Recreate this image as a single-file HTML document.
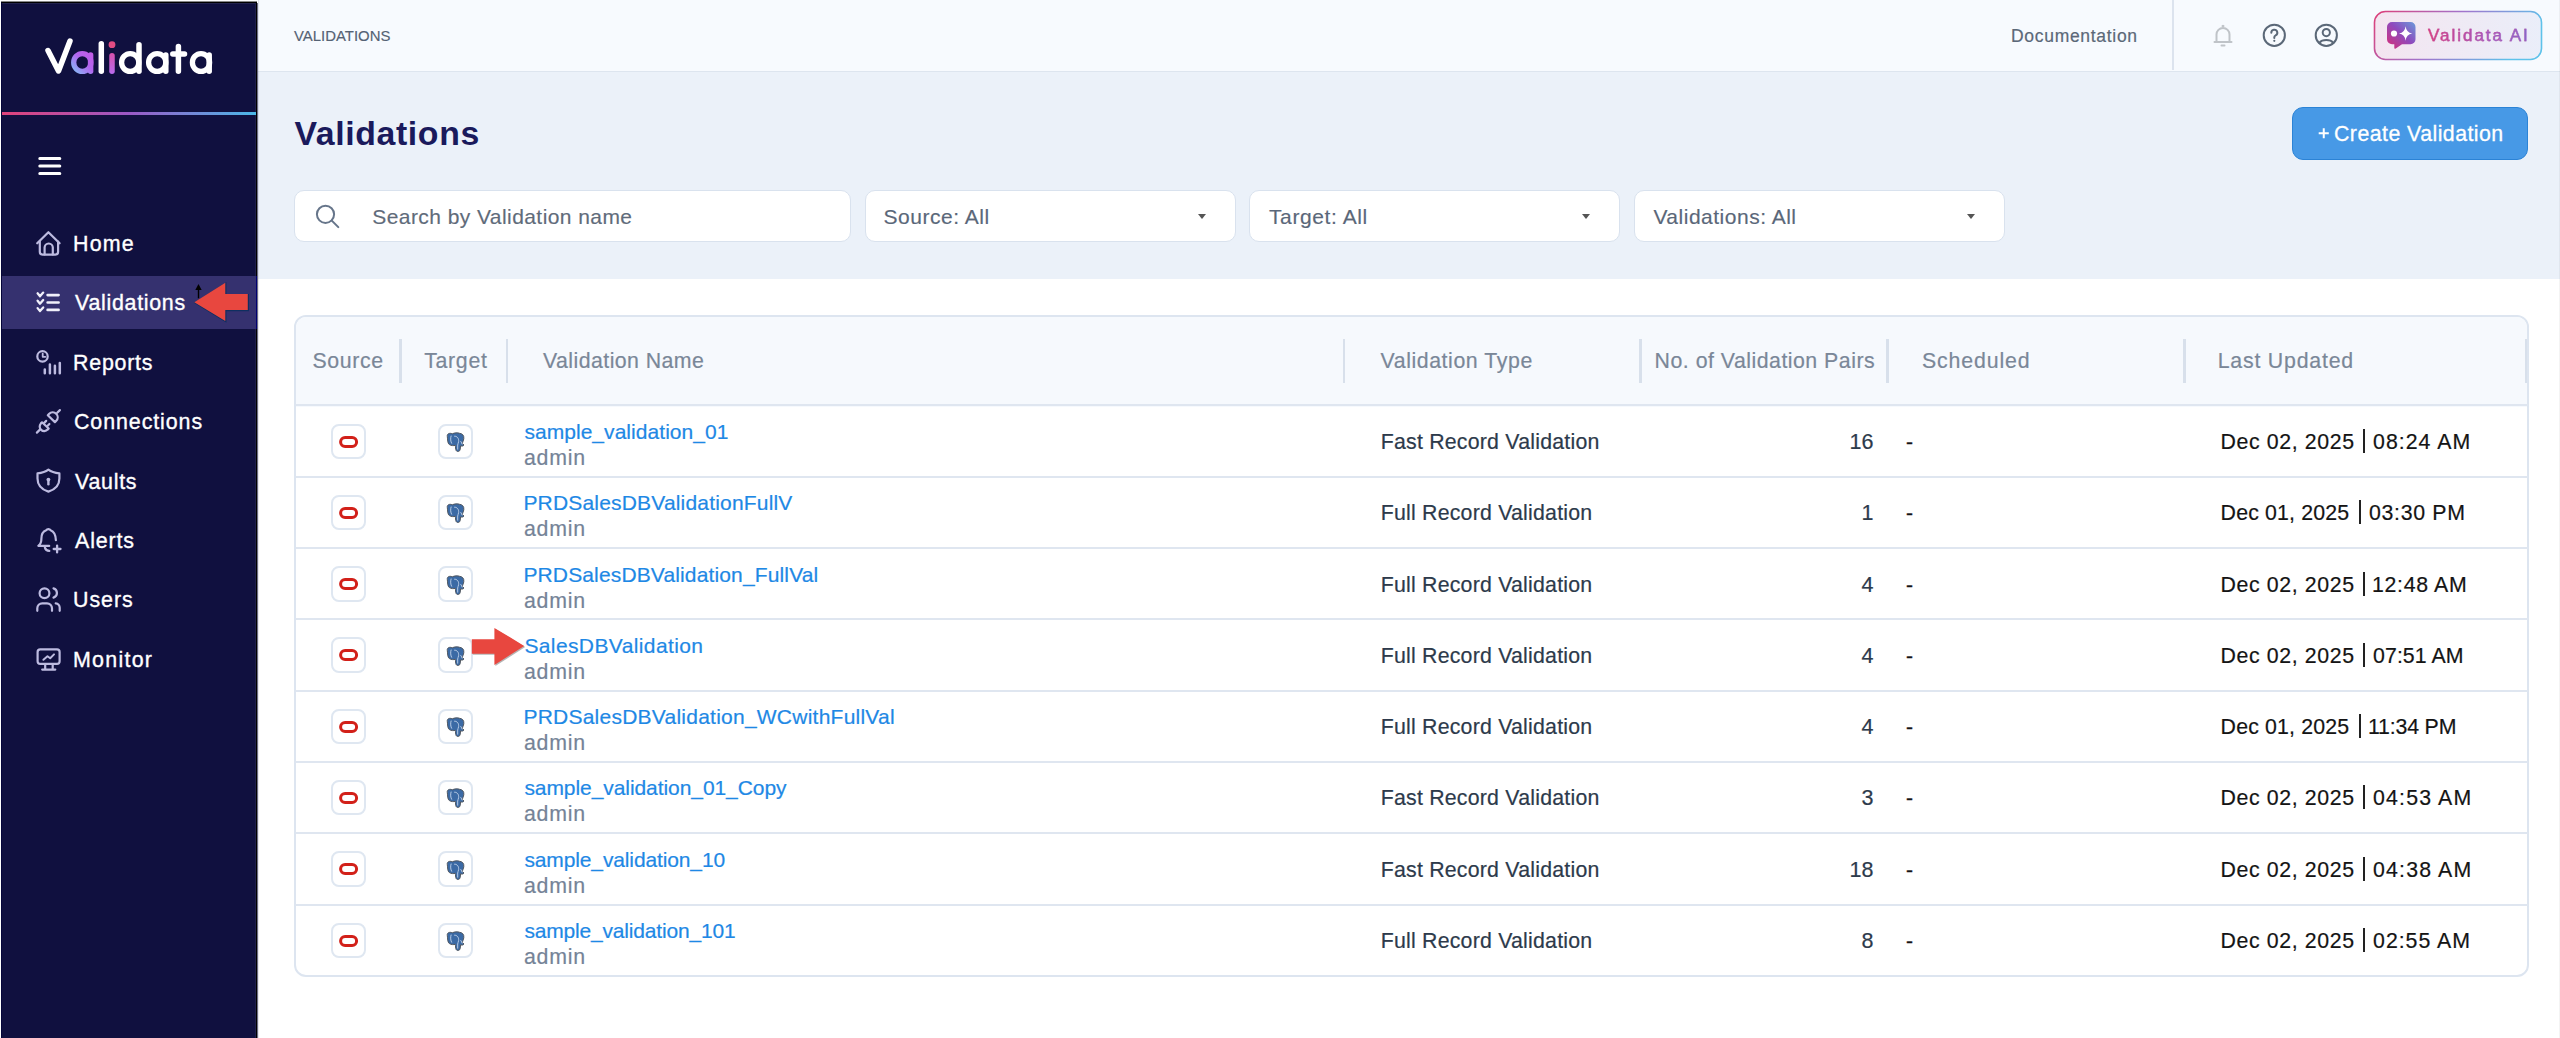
<!DOCTYPE html>
<html><head><meta charset="utf-8"><style>
*{margin:0;padding:0;box-sizing:border-box}
html,body{width:2560px;height:1038px;overflow:hidden;background:#fff;font-family:"Liberation Sans",sans-serif}
#sb{position:absolute;left:1px;top:2px;width:256px;height:1036px;background:#10103F;border-top:1px solid #000;border-right:1px solid #000;border-left:1px solid #05053a}
#sbtop{position:absolute;left:1px;top:1px;width:256px;height:1px;background:#888}
#sbw{position:absolute;left:257px;top:3px;width:1px;height:1038px;background:#6E6E85}
.gline{position:absolute;left:2px;top:112px;width:254px;height:3px;background:linear-gradient(90deg,#E0437A,#9B59C6 50%,#4BB8E8)}
.act{position:absolute;left:2px;top:276px;width:254px;height:53px;background:#35316F}
#hdr{position:absolute;left:258px;top:0;width:2302px;height:72px;background:#F7FAFE;border-bottom:1px solid #DDE5EF}
#gray{position:absolute;left:258px;top:72px;width:2302px;height:206.6px;background:#EBF1F9}
.t{position:absolute;white-space:pre;line-height:1}
.ico{position:absolute;overflow:visible}
.box{position:absolute;background:#fff;border:1px solid #D9E2EE;border-radius:10px;top:190px;height:52px}
.caret{position:absolute;top:214px;width:0;height:0;border-left:4.5px solid transparent;border-right:4.5px solid transparent;border-top:5px solid #555}
#card{position:absolute;left:293.5px;top:314.5px;width:2235.5px;height:662.5px;border:2px solid #DDE5F0;border-radius:12px;overflow:hidden;background:#fff}
#thead{position:absolute;left:0;top:0;width:100%;height:90px;background:#F6F9FD}
.rl{position:absolute;left:0;width:100%;height:1.5px;background:#DCE5F0}
.dv{position:absolute;top:339px;width:2.5px;height:44px;background:#D8E0EB}
.ib{position:absolute;width:35.5px;height:35.5px;border:2px solid #DFE7F1;border-radius:8px;background:#fff}
</style></head><body>
<svg width="0" height="0" style="position:absolute"><defs><g id="pg">
<path d="M447.3 436.5 C446.8 433.8 449.5 432.6 452.3 433.8 C454.5 432.7 457.5 432.6 459.5 433.3 C462.3 433.5 464.2 435.5 463.8 438.5 C463.5 440.8 462.5 442.2 462.4 443.6 L464 445 C463.2 446.3 461.5 446.3 460.6 445.8 L460.2 449.3 C460 451.6 457.2 452.2 456.2 450.6 C455.4 449.2 455.6 446.8 455.3 445.3 C453.5 445.8 451.4 445.8 449.4 444.6 C447.4 443.2 447.7 439.5 447.3 436.5 Z" fill="#3B6AA5" stroke="#50565E" stroke-width="1"/>
<path d="M451.2 435.6 C450.3 438.3 450.6 441.6 451.8 443.6 M454.2 436.2 C457.2 436 459 438.5 458.6 441.6 C458.4 443 457.8 444 457.7 445 V449.6 M460.6 441.2 C461.5 442.5 462 443.5 462.2 444.4" fill="none" stroke="#C5D6EC" stroke-width="0.9"/>
</g></defs></svg>
<div id="hdr"></div><div id="gray"></div><div style="position:absolute;left:2559px;top:0;width:1px;height:1038px;background:rgba(0,0,0,0.045)"></div>
<div id="sb"></div><div id="sbtop"></div><div id="sbw"></div><div style="position:absolute;left:255px;top:3px;width:1px;height:1035px;background:#1F1F4A"></div><div style="position:absolute;left:2px;top:3px;width:254px;height:1px;background:#22224C"></div><div style="position:absolute;left:258px;top:0;width:1px;height:1038px;background:rgba(20,20,60,0.1)"></div>
<div class="gline"></div>
<div class="act"></div><div style="position:absolute;left:256px;top:276px;width:1px;height:53px;background:#000070"></div>
<svg class="ico" style="left:0;top:0" width="257" height="110" viewBox="0 0 257 110">
<defs>
<linearGradient id="ga" gradientUnits="userSpaceOnUse" x1="72" y1="74" x2="94" y2="52"><stop offset="0" stop-color="#7DC8F8"/><stop offset="0.55" stop-color="#B364EE"/><stop offset="1" stop-color="#C45BE6"/></linearGradient>
<linearGradient id="gi" gradientUnits="userSpaceOnUse" x1="112" y1="52" x2="112" y2="74"><stop offset="0" stop-color="#D84FA8"/><stop offset="1" stop-color="#B86BEE"/></linearGradient>
</defs>
<g fill="none" stroke-linecap="round" stroke-linejoin="round" stroke-width="5.5">
<path d="M48 50.5 L58.5 71 L70 41" stroke="#fff"/>
<ellipse cx="82.3" cy="62.5" rx="8.6" ry="8.9" stroke-width="5.3" stroke="url(#ga)"/>
<path d="M90.6 55 V71.2" stroke="url(#ga)"/>
<path d="M101.3 43.8 V71.2" stroke="#fff"/>
<path d="M112 55.8 V71.2" stroke="url(#gi)"/>
<ellipse cx="130.2" cy="62.5" rx="8.6" ry="8.9" stroke-width="5.3" stroke="#fff"/>
<path d="M139 44.8 V71.2" stroke="#fff"/>
<ellipse cx="157.2" cy="62.5" rx="8.6" ry="8.9" stroke-width="5.3" stroke="#fff"/>
<path d="M165.8 55 V71.2" stroke="#fff"/>
<path d="M178.4 46.5 V71.2 M172.8 54 H184.5" stroke="#fff"/>
<ellipse cx="201" cy="62.5" rx="8.6" ry="8.9" stroke-width="5.3" stroke="#fff"/>
<path d="M209.2 55 V71.2" stroke="#fff"/>
</g>
<circle cx="112" cy="44.7" r="3.4" fill="#E24C83"/>
</svg>
<svg class="ico" style="left:0;top:140px" width="100" height="50" viewBox="0 140 100 50">
<g stroke="#fff" stroke-width="3" stroke-linecap="round"><path d="M39.8 158.5H59.8M39.8 166H59.8M39.8 173.5H59.8"/></g></svg>
<svg class="ico" style="left:30px;top:226px" width="36" height="34" viewBox="30 226 36 34"><g fill="none" stroke="#BDBBE0" stroke-width="2.2" stroke-linecap="round" stroke-linejoin="round"><path d="M37.2 243.3 L48.4 232.2 L59.6 243.3"/><path d="M39.8 241.5 V251.8 Q39.8 254.6 42.6 254.6 H55.3 Q58.1 254.6 58.1 251.8 V241.5"/><path d="M44.6 254.4 V247.6 a4.1 4.1 0 0 1 8.2 0 V254.4"/></g></svg>
<div class="t" style="left:73px;top:234px;font-size:21.4px;color:#fff;letter-spacing:1.233px;-webkit-text-stroke:0.35px #fff">Home</div>
<svg class="ico" style="left:30px;top:285px" width="36" height="34" viewBox="30 285 36 34"><g fill="none" stroke="#F0F0FA" stroke-width="2.2" stroke-linecap="round" stroke-linejoin="round"><path d="M37.6 293.3 L40 296.3 L43.2 292.6 M37.6 300.7 L40 303.7 L43.2 300 M37.6 308.1 L40 311.1 L43.2 307.4" stroke-width="2.3"/><path d="M47.6 295.1 H58.6 M47.6 302.5 H58.6 M47.6 309.9 H58.6" stroke-width="2.6"/></g></svg>
<div class="t" style="left:75px;top:293px;font-size:21.4px;color:#fff;letter-spacing:0.71px;-webkit-text-stroke:0.35px #fff">Validations</div>
<svg class="ico" style="left:30px;top:345px" width="36" height="34" viewBox="30 345 36 34"><g fill="none" stroke="#BDBBE0" stroke-width="2.2" stroke-linecap="round" stroke-linejoin="round"><circle cx="42.5" cy="356.4" r="5.2"/><path d="M42.7 353.6 V356.8 H45.3" stroke-width="1.8"/><path d="M44.8 369.6 V373.2 M49.9 364.6 V373.2 M54.9 365.8 V373.2 M59.8 363.1 V373.2" stroke-width="2.5"/></g></svg>
<div class="t" style="left:73px;top:353px;font-size:21.4px;color:#fff;letter-spacing:0.767px;-webkit-text-stroke:0.35px #fff">Reports</div>
<svg class="ico" style="left:30px;top:404px" width="36" height="34" viewBox="30 404 36 34"><g fill="none" stroke="#BDBBE0" stroke-width="2.2" stroke-linecap="round" stroke-linejoin="round"><path d="M47.8 415.2 L54.9 422.1 L56.3 420.7 A4.95 4.95 0 0 0 49.2 413.8 Z"/><path d="M57.2 412.8 L59.9 410.1"/><path d="M42 422.3 L48.7 428.5 L47.6 429.6 A4.56 4.56 0 0 1 40.9 423.4 Z"/><path d="M44.2 422.9 L46.2 420.9 M47.4 426 L49.4 424"/><path d="M36.9 432.6 L39.9 429.6"/></g></svg>
<div class="t" style="left:74px;top:412px;font-size:21.4px;color:#fff;letter-spacing:0.92px;-webkit-text-stroke:0.35px #fff">Connections</div>
<svg class="ico" style="left:30px;top:464px" width="36" height="34" viewBox="30 464 36 34"><g fill="none" stroke="#BDBBE0" stroke-width="2.2" stroke-linecap="round" stroke-linejoin="round"><path d="M48.4 469.7 C45.6 471.9 41.8 473 37.5 473.4 V478.5 C37.5 485 41.8 489.6 48.4 491.6 C55 489.6 59.4 485 59.4 478.5 V473.4 C55 473 51.2 471.9 48.4 469.7 Z"/><circle cx="48.4" cy="479.6" r="1.9" fill="#BDBBE0" stroke="none"/><path d="M48.4 480.5 V484.2" stroke-width="2.4"/></g></svg>
<div class="t" style="left:75px;top:472px;font-size:21.4px;color:#fff;letter-spacing:0.74px;-webkit-text-stroke:0.35px #fff">Vaults</div>
<svg class="ico" style="left:30px;top:523px" width="36" height="34" viewBox="30 523 36 34"><g fill="none" stroke="#BDBBE0" stroke-width="2.2" stroke-linecap="round" stroke-linejoin="round"><path d="M38.6 545.7 C40.6 544.2 41.4 542 41.4 538.5 C41.4 534 43.2 531.3 46.2 530.2 C47.2 528.7 49.6 528.7 50.6 530.2 C53.8 531.4 55.7 534.5 55.9 540.2"/><path d="M38.6 545.9 H49.2"/><path d="M44.9 547.6 A4.5 4.5 0 0 0 49.3 550.9"/><path d="M57.1 545.6 V552.4 M53.7 549 H60.5" stroke-width="2.3"/></g></svg>
<div class="t" style="left:75px;top:531px;font-size:21.4px;color:#fff;letter-spacing:0.86px;-webkit-text-stroke:0.35px #fff">Alerts</div>
<svg class="ico" style="left:30px;top:582px" width="36" height="34" viewBox="30 582 36 34"><g fill="none" stroke="#BDBBE0" stroke-width="2.2" stroke-linecap="round" stroke-linejoin="round"><circle cx="44.5" cy="593.2" r="4.9"/><path d="M53.5 588.4 A4.8 4.8 0 0 1 53.5 597.6"/><path d="M37.3 610.8 V608.3 a5 5 0 0 1 5 -5 H47 a5 5 0 0 1 5 5 V610.8"/><path d="M55.7 603.4 a4.4 4.4 0 0 1 4 4.4 V610.8"/></g></svg>
<div class="t" style="left:73px;top:590px;font-size:21.4px;color:#fff;letter-spacing:0.975px;-webkit-text-stroke:0.35px #fff">Users</div>
<svg class="ico" style="left:30px;top:642px" width="36" height="34" viewBox="30 642 36 34"><g fill="none" stroke="#BDBBE0" stroke-width="2.2" stroke-linecap="round" stroke-linejoin="round"><rect x="37.6" y="649.3" width="22" height="14.6" rx="2.6"/><path d="M43.4 659.8 L47.5 656.2 L50.2 658.2 L54 654.4" stroke-width="2"/><path d="M45.2 665 V669 M52.7 665 V669"/><path d="M42.2 669.6 H55.3"/></g></svg>
<div class="t" style="left:73px;top:650px;font-size:21.4px;color:#fff;letter-spacing:1.267px;-webkit-text-stroke:0.35px #fff">Monitor</div>
<div class="t" style="left:293.9px;top:29px;font-size:14.9px;color:#556274;letter-spacing:0.03px;-webkit-text-stroke:0.15px #556274">VALIDATIONS</div>
<div class="t" style="left:2011px;top:28px;font-size:17.5px;color:#5B6878;letter-spacing:0.7px;-webkit-text-stroke:0.2px #5B6878">Documentation</div>
<div style="position:absolute;left:2172px;top:0;width:1.5px;height:70px;background:#DCE3EE"></div>
<svg class="ico" style="left:2210px;top:22px" width="26" height="28" viewBox="0 0 26 28"><g fill="none" stroke="#BFC3C8" stroke-width="2" stroke-linecap="round" stroke-linejoin="round"><path d="M12.5 4 a1 1 0 0 1 1 0"/><path d="M6.5 19 V12.5 a6.5 6.5 0 0 1 13 0 V19"/><path d="M4.5 20 H21.5"/><path d="M11.5 23.5 H14.5"/></g></svg>
<svg class="ico" style="left:2262px;top:23px" width="25" height="25" viewBox="0 0 25 25"><g fill="none" stroke="#5B6878" stroke-width="2" stroke-linecap="round"><circle cx="12.3" cy="12.3" r="10.6"/><path d="M9.3 9.7 a3 3 0 1 1 4.3 2.7 c-0.8 0.4 -1.3 1 -1.3 1.9 v0.6"/></g><circle cx="12.3" cy="17.8" r="1.1" fill="#5B6878"/></svg>
<svg class="ico" style="left:2314px;top:23px" width="25" height="25" viewBox="0 0 25 25"><g fill="none" stroke="#5B6878" stroke-width="2" stroke-linecap="round"><circle cx="12.3" cy="12.3" r="10.6"/><circle cx="12.3" cy="9.6" r="3.6"/><path d="M5.2 19.8 a8.2 5.5 0 0 1 14.2 0"/></g></svg>
<svg class="ico" style="left:2373px;top:10px" width="170" height="51" viewBox="0 0 170 51">
<defs>
<linearGradient id="bb" x1="0" y1="0" x2="1" y2="0.25"><stop offset="0" stop-color="#DD3F78"/><stop offset="0.5" stop-color="#A174CC"/><stop offset="1" stop-color="#5EC2EA"/></linearGradient>
<linearGradient id="bf" x1="0" y1="0" x2="1" y2="0"><stop offset="0" stop-color="#F4E5F0"/><stop offset="1" stop-color="#EAEEF9"/></linearGradient>
<linearGradient id="bi" x1="0" y1="1" x2="1" y2="0"><stop offset="0" stop-color="#DA2C74"/><stop offset="0.55" stop-color="#8E4BBE"/><stop offset="1" stop-color="#6A9ADA"/></linearGradient>
<linearGradient id="bt" x1="0" y1="0" x2="1" y2="0"><stop offset="0" stop-color="#DB3D7D"/><stop offset="1" stop-color="#7A70D4"/></linearGradient>
</defs>
<rect x="1.5" y="1.5" width="167" height="48" rx="11" fill="url(#bf)" stroke="url(#bb)" stroke-width="1.6"/>
<path d="M19 12 H37.5 a5 5 0 0 1 5 5 V29.3 a5 5 0 0 1 -5 5 H29 L22.8 38.5 Q21.3 39.5 21.3 37.8 V34.3 H19 a5 5 0 0 1 -5 -5 V17 a5 5 0 0 1 5 -5 Z" fill="url(#bi)"/>
<circle cx="21" cy="23.5" r="3.1" fill="#fff"/>
<path d="M32.6 16.3 Q33.3 22.6 39.2 23.5 Q33.3 24.4 32.6 30.7 Q31.9 24.4 26 23.5 Q31.9 22.6 32.6 16.3 Z" fill="#fff"/>
</svg>
<div class="t" style="left:2428px;top:27px;font-size:17px;color:#B04EA6;letter-spacing:1.98px;-webkit-text-stroke:0.35px #C04A9A;background:linear-gradient(90deg,#DB3D7D,#9A5CC8 60%,#7A70D4);-webkit-background-clip:text;background-clip:text;color:transparent">Validata AI</div>
<div class="t" style="left:294.4px;top:117px;font-size:33.8px;color:#1A1A5C;letter-spacing:0.64px;font-weight:bold">Validations</div>
<div style="position:absolute;left:2292px;top:107px;width:236px;height:53px;background:#4799E6;border:1px solid #2B83D6;border-radius:11px"></div>
<svg class="ico" style="left:2316px;top:126px" width="16" height="16" viewBox="2316 126 16 16"><path d="M2323.75 128.3 V138.3 M2318.7 133.3 H2328.8" stroke="#fff" stroke-width="2"/></svg>
<div class="t" style="left:2334px;top:124px;font-size:21.3px;color:#fff;letter-spacing:0.463px;-webkit-text-stroke:0.3px #fff">Create Validation</div>
<div class="box" style="left:294px;width:557px"></div>
<svg class="ico" style="left:312px;top:202px" width="30" height="30" viewBox="0 0 30 30"><g fill="none" stroke="#66758A" stroke-width="2" stroke-linecap="round"><circle cx="13.5" cy="12.3" r="8.6"/><path d="M19.8 18.6 L26.3 25.1"/></g></svg>
<div class="t" style="left:372.3px;top:206px;font-size:21px;color:#5F6B7A;letter-spacing:0.429px;-webkit-text-stroke:0.15px #5F6B7A">Search by Validation name</div>
<div class="box" style="left:865px;width:371px"></div>
<div class="t" style="left:883.5px;top:206px;font-size:21px;color:#5A6779;letter-spacing:0.52px;-webkit-text-stroke:0.15px #5A6779">Source: All</div>
<div class="caret" style="left:1198px"></div>
<div class="box" style="left:1249px;width:371px"></div>
<div class="t" style="left:1269px;top:206px;font-size:21px;color:#5A6779;letter-spacing:0.6px;-webkit-text-stroke:0.15px #5A6779">Target: All</div>
<div class="caret" style="left:1582px"></div>
<div class="box" style="left:1634px;width:371px"></div>
<div class="t" style="left:1653.4px;top:206px;font-size:21px;color:#5A6779;letter-spacing:0.507px;-webkit-text-stroke:0.15px #5A6779">Validations: All</div>
<div class="caret" style="left:1967px"></div>
<div id="card"><div id="thead"></div></div>
<div class="rl" style="top:404px;left:295.5px;width:2232px;height:2px;background:#DFE6F0"></div>
<div class="rl" style="top:476px;left:295.5px;width:2232px;height:2px;background:#DFE6F0"></div>
<div class="rl" style="top:547px;left:295.5px;width:2232px;height:2px;background:#DFE6F0"></div>
<div class="rl" style="top:618px;left:295.5px;width:2232px;height:2px;background:#DFE6F0"></div>
<div class="rl" style="top:690px;left:295.5px;width:2232px;height:2px;background:#DFE6F0"></div>
<div class="rl" style="top:761px;left:295.5px;width:2232px;height:2px;background:#DFE6F0"></div>
<div class="rl" style="top:832px;left:295.5px;width:2232px;height:2px;background:#DFE6F0"></div>
<div class="rl" style="top:904px;left:295.5px;width:2232px;height:2px;background:#DFE6F0"></div>
<div class="t" style="left:312.5px;top:351px;font-size:21.3px;color:#7A8798;letter-spacing:0.62px;-webkit-text-stroke:0.2px #7A8798">Source</div>
<div class="t" style="left:424.2px;top:351px;font-size:21.3px;color:#7A8798;letter-spacing:0.7px;-webkit-text-stroke:0.2px #7A8798">Target</div>
<div class="t" style="left:543px;top:351px;font-size:21.3px;color:#7A8798;letter-spacing:0.443px;-webkit-text-stroke:0.2px #7A8798">Validation Name</div>
<div class="t" style="left:1380.5px;top:351px;font-size:21.3px;color:#7A8798;letter-spacing:0.579px;-webkit-text-stroke:0.2px #7A8798">Validation Type</div>
<div class="t" style="left:1654.6px;top:351px;font-size:21.3px;color:#7A8798;letter-spacing:0.495px;-webkit-text-stroke:0.2px #7A8798">No. of Validation Pairs</div>
<div class="t" style="left:1922px;top:351px;font-size:21.3px;color:#7A8798;letter-spacing:0.875px;-webkit-text-stroke:0.2px #7A8798">Scheduled</div>
<div class="t" style="left:2217.7px;top:351px;font-size:21.3px;color:#7A8798;letter-spacing:0.8px;-webkit-text-stroke:0.2px #7A8798">Last Updated</div>
<div class="dv" style="left:399.0px"></div>
<div class="dv" style="left:505.8px"></div>
<div class="dv" style="left:1342.8px"></div>
<div class="dv" style="left:1639.4px"></div>
<div class="dv" style="left:1886.3px"></div>
<div class="dv" style="left:2183.2px"></div>
<div class="dv" style="left:2524.6px"></div>
<div class="ib" style="left:330.5px;top:423.50px"></div>
<svg class="ico" style="left:339px;top:435.50px" width="20" height="13" viewBox="0 0 20 13"><rect x="1.6" y="1.6" width="16" height="9" rx="4.5" fill="none" stroke="#D22019" stroke-width="3"/></svg>
<div class="ib" style="left:437.5px;top:423.50px"></div>
<svg class="ico" style="left:440px;top:428px" width="30" height="28" viewBox="440 428 30 28"><use href="#pg"/></svg>
<div class="t" style="left:524.4px;top:421px;font-size:21px;color:#1E88E5;letter-spacing:0.047px;-webkit-text-stroke:0.2px #1E88E5">sample_validation_01</div>
<div class="t" style="left:524px;top:448px;font-size:21.3px;color:#758397;letter-spacing:0.75px;-webkit-text-stroke:0.2px #758397">admin</div>
<div class="t" style="left:1380.7px;top:432px;font-size:21.3px;color:#2D3A4B;letter-spacing:0.229px;-webkit-text-stroke:0.2px #2D3A4B">Fast Record Validation</div>
<div class="t" style="right:686.5px;top:432px;font-size:21.5px;color:#2D3A4B;-webkit-text-stroke:0.2px #2D3A4B">16</div>
<div class="t" style="left:1906px;top:431px;font-size:21px;color:#141414;-webkit-text-stroke:0.3px #141414">-</div>
<div class="t" style="left:2220.6px;top:432px;font-size:21.3px;color:#141414;letter-spacing:0.609px;-webkit-text-stroke:0.2px #141414">Dec 02, 2025</div>
<div style="position:absolute;left:2363px;top:429px;width:2px;height:24px;background:#222"></div>
<div class="t" style="left:2373.1px;top:432px;font-size:21.3px;color:#141414;letter-spacing:1.014px;-webkit-text-stroke:0.2px #141414">08:24 AM</div>
<div class="ib" style="left:330.5px;top:494.79px"></div>
<svg class="ico" style="left:339px;top:506.79px" width="20" height="13" viewBox="0 0 20 13"><rect x="1.6" y="1.6" width="16" height="9" rx="4.5" fill="none" stroke="#D22019" stroke-width="3"/></svg>
<div class="ib" style="left:437.5px;top:494.79px"></div>
<svg class="ico" style="left:440px;top:499px" width="30" height="28" viewBox="440 428 30 28"><use href="#pg"/></svg>
<div class="t" style="left:523.4px;top:492px;font-size:21px;color:#1E88E5;letter-spacing:0.183px;-webkit-text-stroke:0.2px #1E88E5">PRDSalesDBValidationFullV</div>
<div class="t" style="left:524px;top:519px;font-size:21.3px;color:#758397;letter-spacing:0.75px;-webkit-text-stroke:0.2px #758397">admin</div>
<div class="t" style="left:1380.7px;top:503px;font-size:21.3px;color:#2D3A4B;letter-spacing:0.224px;-webkit-text-stroke:0.2px #2D3A4B">Full Record Validation</div>
<div class="t" style="right:686.5px;top:503px;font-size:21.5px;color:#2D3A4B;-webkit-text-stroke:0.2px #2D3A4B">1</div>
<div class="t" style="left:1906px;top:502px;font-size:21px;color:#141414;-webkit-text-stroke:0.3px #141414">-</div>
<div class="t" style="left:2220.6px;top:503px;font-size:21.3px;color:#141414;letter-spacing:0.173px;-webkit-text-stroke:0.2px #141414">Dec 01, 2025</div>
<div style="position:absolute;left:2358.8px;top:500px;width:2px;height:24px;background:#222"></div>
<div class="t" style="left:2369px;top:503px;font-size:21.3px;color:#141414;letter-spacing:0.686px;-webkit-text-stroke:0.2px #141414">03:30 PM</div>
<div class="ib" style="left:330.5px;top:566.08px"></div>
<svg class="ico" style="left:339px;top:578.08px" width="20" height="13" viewBox="0 0 20 13"><rect x="1.6" y="1.6" width="16" height="9" rx="4.5" fill="none" stroke="#D22019" stroke-width="3"/></svg>
<div class="ib" style="left:437.5px;top:566.08px"></div>
<svg class="ico" style="left:440px;top:571px" width="30" height="28" viewBox="440 428 30 28"><use href="#pg"/></svg>
<div class="t" style="left:523.4px;top:564px;font-size:21px;color:#1E88E5;letter-spacing:0.141px;-webkit-text-stroke:0.2px #1E88E5">PRDSalesDBValidation_FullVal</div>
<div class="t" style="left:524px;top:591px;font-size:21.3px;color:#758397;letter-spacing:0.75px;-webkit-text-stroke:0.2px #758397">admin</div>
<div class="t" style="left:1380.7px;top:575px;font-size:21.3px;color:#2D3A4B;letter-spacing:0.224px;-webkit-text-stroke:0.2px #2D3A4B">Full Record Validation</div>
<div class="t" style="right:686.5px;top:575px;font-size:21.5px;color:#2D3A4B;-webkit-text-stroke:0.2px #2D3A4B">4</div>
<div class="t" style="left:1906px;top:574px;font-size:21px;color:#141414;-webkit-text-stroke:0.3px #141414">-</div>
<div class="t" style="left:2220.6px;top:575px;font-size:21.3px;color:#141414;letter-spacing:0.609px;-webkit-text-stroke:0.2px #141414">Dec 02, 2025</div>
<div style="position:absolute;left:2363px;top:572px;width:2px;height:24px;background:#222"></div>
<div class="t" style="left:2372.1px;top:575px;font-size:21.3px;color:#141414;letter-spacing:0.657px;-webkit-text-stroke:0.2px #141414">12:48 AM</div>
<div class="ib" style="left:330.5px;top:637.37px"></div>
<svg class="ico" style="left:339px;top:649.37px" width="20" height="13" viewBox="0 0 20 13"><rect x="1.6" y="1.6" width="16" height="9" rx="4.5" fill="none" stroke="#D22019" stroke-width="3"/></svg>
<div class="ib" style="left:437.5px;top:637.37px"></div>
<svg class="ico" style="left:440px;top:642px" width="30" height="28" viewBox="440 428 30 28"><use href="#pg"/></svg>
<div class="t" style="left:524.4px;top:635px;font-size:21px;color:#1E88E5;letter-spacing:0.388px;-webkit-text-stroke:0.2px #1E88E5">SalesDBValidation</div>
<div class="t" style="left:524px;top:662px;font-size:21.3px;color:#758397;letter-spacing:0.75px;-webkit-text-stroke:0.2px #758397">admin</div>
<div class="t" style="left:1380.7px;top:646px;font-size:21.3px;color:#2D3A4B;letter-spacing:0.224px;-webkit-text-stroke:0.2px #2D3A4B">Full Record Validation</div>
<div class="t" style="right:686.5px;top:646px;font-size:21.5px;color:#2D3A4B;-webkit-text-stroke:0.2px #2D3A4B">4</div>
<div class="t" style="left:1906px;top:645px;font-size:21px;color:#141414;-webkit-text-stroke:0.3px #141414">-</div>
<div class="t" style="left:2220.6px;top:646px;font-size:21.3px;color:#141414;letter-spacing:0.609px;-webkit-text-stroke:0.2px #141414">Dec 02, 2025</div>
<div style="position:absolute;left:2363px;top:643px;width:2px;height:24px;background:#222"></div>
<div class="t" style="left:2373.1px;top:646px;font-size:21.3px;color:#141414;letter-spacing:0.057px;-webkit-text-stroke:0.2px #141414">07:51 AM</div>
<div class="ib" style="left:330.5px;top:708.66px"></div>
<svg class="ico" style="left:339px;top:720.66px" width="20" height="13" viewBox="0 0 20 13"><rect x="1.6" y="1.6" width="16" height="9" rx="4.5" fill="none" stroke="#D22019" stroke-width="3"/></svg>
<div class="ib" style="left:437.5px;top:708.66px"></div>
<svg class="ico" style="left:440px;top:713px" width="30" height="28" viewBox="440 428 30 28"><use href="#pg"/></svg>
<div class="t" style="left:523.4px;top:706px;font-size:21px;color:#1E88E5;letter-spacing:0.239px;-webkit-text-stroke:0.2px #1E88E5">PRDSalesDBValidation_WCwithFullVal</div>
<div class="t" style="left:524px;top:733px;font-size:21.3px;color:#758397;letter-spacing:0.75px;-webkit-text-stroke:0.2px #758397">admin</div>
<div class="t" style="left:1380.7px;top:717px;font-size:21.3px;color:#2D3A4B;letter-spacing:0.224px;-webkit-text-stroke:0.2px #2D3A4B">Full Record Validation</div>
<div class="t" style="right:686.5px;top:717px;font-size:21.5px;color:#2D3A4B;-webkit-text-stroke:0.2px #2D3A4B">4</div>
<div class="t" style="left:1906px;top:716px;font-size:21px;color:#141414;-webkit-text-stroke:0.3px #141414">-</div>
<div class="t" style="left:2220.6px;top:717px;font-size:21.3px;color:#141414;letter-spacing:0.173px;-webkit-text-stroke:0.2px #141414">Dec 01, 2025</div>
<div style="position:absolute;left:2358.8px;top:714px;width:2px;height:24px;background:#222"></div>
<div class="t" style="left:2368px;top:717px;font-size:21.3px;color:#141414;letter-spacing:-0.171px;-webkit-text-stroke:0.2px #141414">11:34 PM</div>
<div class="ib" style="left:330.5px;top:779.95px"></div>
<svg class="ico" style="left:339px;top:791.95px" width="20" height="13" viewBox="0 0 20 13"><rect x="1.6" y="1.6" width="16" height="9" rx="4.5" fill="none" stroke="#D22019" stroke-width="3"/></svg>
<div class="ib" style="left:437.5px;top:779.95px"></div>
<svg class="ico" style="left:440px;top:784px" width="30" height="28" viewBox="440 428 30 28"><use href="#pg"/></svg>
<div class="t" style="left:524.4px;top:777px;font-size:21px;color:#1E88E5;letter-spacing:-0.071px;-webkit-text-stroke:0.2px #1E88E5">sample_validation_01_Copy</div>
<div class="t" style="left:524px;top:804px;font-size:21.3px;color:#758397;letter-spacing:0.75px;-webkit-text-stroke:0.2px #758397">admin</div>
<div class="t" style="left:1380.7px;top:788px;font-size:21.3px;color:#2D3A4B;letter-spacing:0.229px;-webkit-text-stroke:0.2px #2D3A4B">Fast Record Validation</div>
<div class="t" style="right:686.5px;top:788px;font-size:21.5px;color:#2D3A4B;-webkit-text-stroke:0.2px #2D3A4B">3</div>
<div class="t" style="left:1906px;top:787px;font-size:21px;color:#141414;-webkit-text-stroke:0.3px #141414">-</div>
<div class="t" style="left:2220.6px;top:788px;font-size:21.3px;color:#141414;letter-spacing:0.609px;-webkit-text-stroke:0.2px #141414">Dec 02, 2025</div>
<div style="position:absolute;left:2363px;top:785px;width:2px;height:24px;background:#222"></div>
<div class="t" style="left:2373.1px;top:788px;font-size:21.3px;color:#141414;letter-spacing:1.157px;-webkit-text-stroke:0.2px #141414">04:53 AM</div>
<div class="ib" style="left:330.5px;top:851.24px"></div>
<svg class="ico" style="left:339px;top:863.24px" width="20" height="13" viewBox="0 0 20 13"><rect x="1.6" y="1.6" width="16" height="9" rx="4.5" fill="none" stroke="#D22019" stroke-width="3"/></svg>
<div class="ib" style="left:437.5px;top:851.24px"></div>
<svg class="ico" style="left:440px;top:856px" width="30" height="28" viewBox="440 428 30 28"><use href="#pg"/></svg>
<div class="t" style="left:524.4px;top:849px;font-size:21px;color:#1E88E5;letter-spacing:-0.126px;-webkit-text-stroke:0.2px #1E88E5">sample_validation_10</div>
<div class="t" style="left:524px;top:876px;font-size:21.3px;color:#758397;letter-spacing:0.75px;-webkit-text-stroke:0.2px #758397">admin</div>
<div class="t" style="left:1380.7px;top:860px;font-size:21.3px;color:#2D3A4B;letter-spacing:0.229px;-webkit-text-stroke:0.2px #2D3A4B">Fast Record Validation</div>
<div class="t" style="right:686.5px;top:860px;font-size:21.5px;color:#2D3A4B;-webkit-text-stroke:0.2px #2D3A4B">18</div>
<div class="t" style="left:1906px;top:859px;font-size:21px;color:#141414;-webkit-text-stroke:0.3px #141414">-</div>
<div class="t" style="left:2220.6px;top:860px;font-size:21.3px;color:#141414;letter-spacing:0.609px;-webkit-text-stroke:0.2px #141414">Dec 02, 2025</div>
<div style="position:absolute;left:2363px;top:857px;width:2px;height:24px;background:#222"></div>
<div class="t" style="left:2373.1px;top:860px;font-size:21.3px;color:#141414;letter-spacing:1.157px;-webkit-text-stroke:0.2px #141414">04:38 AM</div>
<div class="ib" style="left:330.5px;top:922.53px"></div>
<svg class="ico" style="left:339px;top:934.53px" width="20" height="13" viewBox="0 0 20 13"><rect x="1.6" y="1.6" width="16" height="9" rx="4.5" fill="none" stroke="#D22019" stroke-width="3"/></svg>
<div class="ib" style="left:437.5px;top:922.53px"></div>
<svg class="ico" style="left:440px;top:927px" width="30" height="28" viewBox="440 428 30 28"><use href="#pg"/></svg>
<div class="t" style="left:524.4px;top:920px;font-size:21px;color:#1E88E5;letter-spacing:-0.175px;-webkit-text-stroke:0.2px #1E88E5">sample_validation_101</div>
<div class="t" style="left:524px;top:947px;font-size:21.3px;color:#758397;letter-spacing:0.75px;-webkit-text-stroke:0.2px #758397">admin</div>
<div class="t" style="left:1380.7px;top:931px;font-size:21.3px;color:#2D3A4B;letter-spacing:0.224px;-webkit-text-stroke:0.2px #2D3A4B">Full Record Validation</div>
<div class="t" style="right:686.5px;top:931px;font-size:21.5px;color:#2D3A4B;-webkit-text-stroke:0.2px #2D3A4B">8</div>
<div class="t" style="left:1906px;top:930px;font-size:21px;color:#141414;-webkit-text-stroke:0.3px #141414">-</div>
<div class="t" style="left:2220.6px;top:931px;font-size:21.3px;color:#141414;letter-spacing:0.609px;-webkit-text-stroke:0.2px #141414">Dec 02, 2025</div>
<div style="position:absolute;left:2363px;top:928px;width:2px;height:24px;background:#222"></div>
<div class="t" style="left:2373.1px;top:931px;font-size:21.3px;color:#141414;letter-spacing:0.971px;-webkit-text-stroke:0.2px #141414">02:55 AM</div>
<svg class="ico" style="left:150px;top:270px" width="110" height="62" viewBox="150 270 110 62">
<path d="M195 302.8 L225.8 283.2 V294.6 H248.3 V310.5 H225.8 V321.6 Z" fill="#0B2A5A" stroke="#0B2F60" stroke-width="1.3" stroke-linejoin="miter" opacity="0.9"/>
<path d="M194.3 302.3 L225.3 282.7 V294.1 H247.8 V310 H225.3 V321.1 Z" fill="#E8473F"/>
<path d="M198.5 298.3 V288.5" stroke="#000" stroke-width="1.4"/><path d="M195.3 290 L198.5 284 L201.7 290 Z" fill="#000"/>
</svg>
<svg class="ico" style="left:465px;top:620px" width="65" height="52" viewBox="465 620 65 52">
<path d="M472.8 640.2 H495.4 V628.9 L525.2 646.9 L495.4 666.1 V654.8 H472.8 Z" fill="#2A2A2A" opacity="0.35"/>
<path d="M471.8 639.2 H494.4 V627.9 L524.2 645.9 L494.4 665.1 V653.8 H471.8 Z" fill="#E8473F"/>
</svg>
</body></html>
